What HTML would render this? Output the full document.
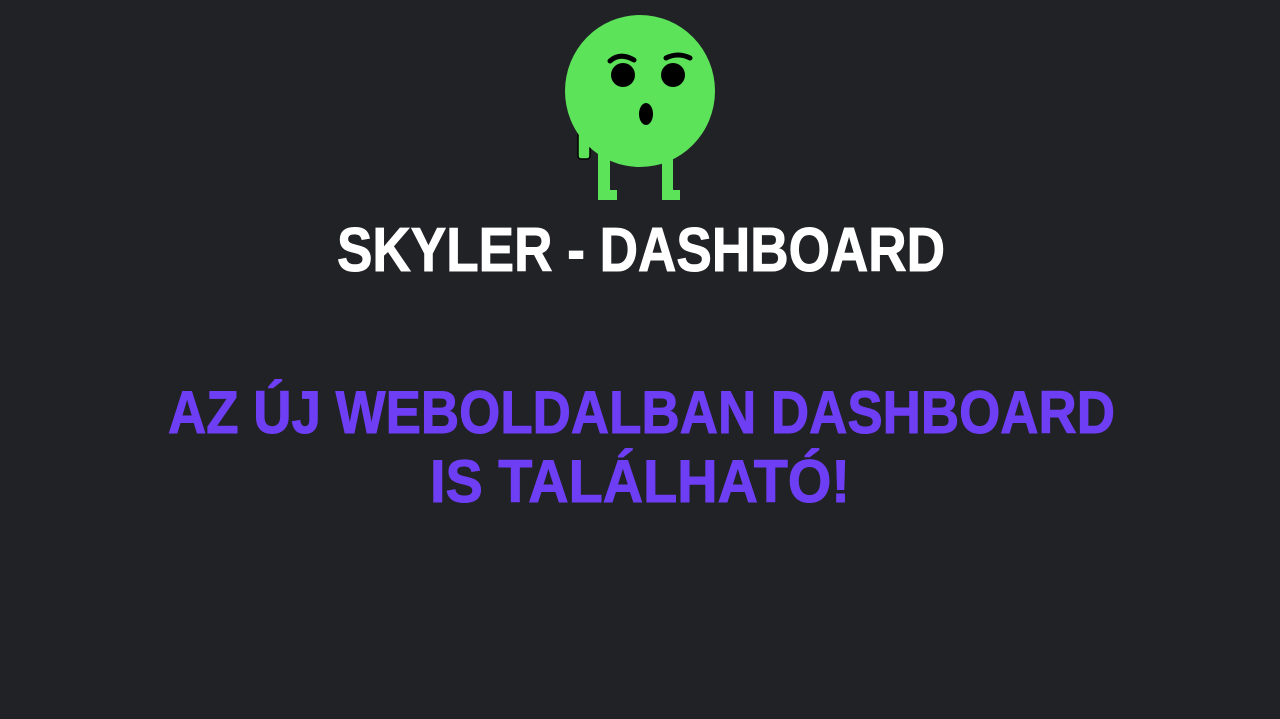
<!DOCTYPE html>
<html><head><meta charset="utf-8"><style>
html,body{margin:0;padding:0;background:#212226;width:1280px;height:719px;overflow:hidden}
.t{position:absolute;left:0;white-space:nowrap;font-family:"Liberation Sans",sans-serif;font-weight:bold;line-height:1;transform-origin:0 0;-webkit-text-stroke:1px currentColor}
</style></head><body>
<svg width="1280" height="719" style="position:absolute;left:0;top:0">
<rect x="578" y="125" width="12" height="34" rx="3" fill="#5ce35a" stroke="#000" stroke-width="1.5"/>
<path d="M598 150 H610 V190 H617 V200 H598 Z" fill="#5ce35a"/>
<path d="M662 150 H673 V190 H680 V200 H662 Z" fill="#5ce35a"/>
<ellipse cx="640" cy="91" rx="75" ry="76" fill="#5ce35a"/>
<circle cx="623" cy="75" r="12" fill="#000"/>
<circle cx="673" cy="75" r="12" fill="#000"/>
<path d="M610 61 Q620 52 634 60" stroke="#000" stroke-width="5" fill="none" stroke-linecap="round"/>
<path d="M666 58 Q678 52 690 58" stroke="#000" stroke-width="5" fill="none" stroke-linecap="round"/>
<ellipse cx="646" cy="114" rx="7" ry="11" fill="#000"/>
</svg>
<div class="t" data-x="337" data-w="608" style="top:220px;font-size:62px;color:#fff">SKYLER - DASHBOARD</div>
<div class="t" data-x="168" data-w="947" style="top:383px;font-size:60px;color:#6e3ef5">AZ ÚJ WEBOLDALBAN DASHBOARD</div>
<div class="t" data-x="430" data-w="420" style="top:452px;font-size:60px;color:#6e3ef5">IS TALÁLHATÓ!</div>
<script>
document.querySelectorAll('.t').forEach(function(e){
var w=e.getBoundingClientRect().width;var s=(+e.dataset.w)/w;
e.style.left=e.dataset.x+'px';e.style.transform='scaleX('+s+')';});
</script>
</body></html>
